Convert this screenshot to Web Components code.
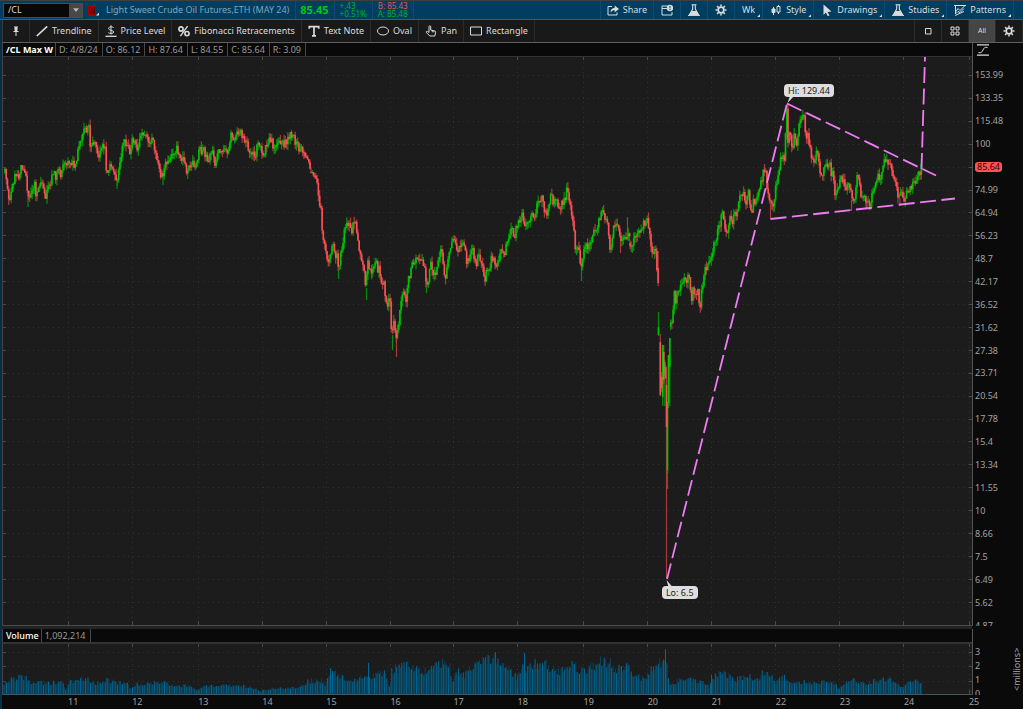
<!DOCTYPE html>
<html lang="en">
<head>
<meta charset="utf-8">
<title>/CL Charts</title>
<style>
    html { background: #0a0a0a; }
    body {
        margin: 0;
        font: 9px/12px "Noto Sans", "Open Sans", sans-serif;
        color: #dcdcdc;
    }
</style>
</head>
<body>
<trade-desk></trade-desk>

<script>
// =========================================================================
// ICONS
// =========================================================================
const GEAR = '<path d="M6 .5v2M6 9.500v2M.5 6h2M9.500 6h2M2.100 2.100l1.400 1.400M8.500 8.500l1.400 1.400M9.900 2.100L8.500 3.500M3.500 8.500L2.100 9.900" stroke-width="1.5"/><circle cx="6" cy="6" r="2.8" stroke-width="1.7"/>';
const FLASK = '<path d="M3.5 .8h5M4.7 1v4L1.5 10.8h9L7.3 5V1" stroke-width="1.1"/><path d="M3.6 7.5h4.8l2 3.3H1.6z" fill="currentColor"/><path d="M0 11.4h12" stroke-width="1"/>';

const ICONS = {
    share: '<path d="M5 2.5H1v8.5h9V8.5"/><path d="M3.5 8.5c0-3 1.5-4.6 4.2-4.6V1.6L12 5 7.7 8.3V6.2C6 6.2 4.8 6.8 3.5 8.5z" fill="currentColor" stroke="none"/>',
    alert: '<path d="M6.5 2H1v9h10V8M1 4.5h5"/><circle cx="9" cy="4" r="3.2" fill="currentColor" stroke="none"/><path d="M9 2v2.4M9 5v1" stroke="#003e61"/>',
    flask: FLASK,
    gear: GEAR,
    candles: '<path d="M3.5 3v8M8.5 1v9"/><path d="M2 5h3v3.500H2z" fill="currentColor"/><path d="M7 2.500h3v5.500H7z" fill="#003e61"/>',
    cursor: '<path d="M2.5 .5l8 7-4 .4 2 3.6-1.8.7-1.8-3.7L2.5 11z" fill="currentColor" stroke="none"/>',
    pattern: '<path d="M0 1.5h12M1 11.5l9-4M1.5 2v8M2 7.5l2-3 2 2 4.5-4.5M2 9.5l2-2 2 1 4-4"/>',
    pin: '<path d="M4 2h4M5 2.500h2v3H5zM3.500 6.500h5" fill="currentColor"/><path d="M6 6v5"/>',
    trend: '<path d="M.8 11L11.2 1.4" stroke-width="1.7"/>',
    price: '<path d="M8.6 2.6C7.8 1.8 3.6 1.2 3.6 3.5S8.7 5 8.7 7 4.2 8.7 3.3 7.6M6 .3v9.2"/><path d="M.5 11.3h11" stroke-width="1.3"/>',
    percent: '<circle cx="3" cy="4" r="2.1" stroke-width="1.6"/><circle cx="9" cy="8.6" r="2.1" stroke-width="1.6"/><path d="M9.6 1.2L2.4 11.2" stroke-width="1.4"/>',
    text: '<path d="M1.3 3.8V1.6h9.4v2.2M6 1.6v9M4 10.8h4" stroke-width="1.7"/>',
    oval: '<ellipse cx="6" cy="6" rx="5.5" ry="4"/>',
    hand: '<path d="M4 7.5V1.7c0-1.3 1.7-1.3 1.7 0V5l4 .9c1 .3 1.1.9.9 1.8L9.8 11H4.9L1.4 7.6c-.7-.9.4-1.8 1.2-1.2L4 7.5M7.3 5.6v1.6M8.9 6v1.4"/>',
    rect: '<path d="M.5 2h11v8H.5z"/>',
    single: '<path d="M3.5 3.5h5.5v5.5H3.5z"/>',
    quad: '<path d="M2 2h3v3H2zM7 2h3v3H7zM2 7h3v3H2zM7 7h3v3H7z"/>',
    curve: '<path d="M0 .8h12M0 11.2h12" stroke-width="1.2"/><path d="M1.500 8.500C7 10.500 5 1.500 10.500 3.500"/>',
    link: '<path d="M0 0h12v12H0z" fill="#a80005" stroke="none"/><path d="M4 2.3H2.5v7.4H4M8 2.3h1.5v7.4H8M5 4l1.2-1v6" stroke="#300"/>',
    down: '<path d="M1.5 3.5h9L6 9z" fill="currentColor" stroke="none"/>'
};

function define(name, html, setup) {
    customElements.define(name, class extends HTMLElement {
        connectedCallback() {
            if (this.shadowRoot) return;
            const root = this.attachShadow({ mode: 'open' });
            root.innerHTML = html;
            if (setup) setup(root, this);
        }
    });
}

define('ui-icon', `
<style>
    :host { display: block; flex: none; width: 12px; height: 12px; }
    svg { display: block; width: 100%; height: 100%; fill: none; stroke: currentColor; }
</style>`, (root, el) => {
    root.innerHTML += `<svg viewBox="0 0 12 12" preserveAspectRatio="none" aria-hidden="true">${ICONS[el.getAttribute('name')]}</svg>`;
});

// Toolbar button: icon + slotted label; "menu" adds the corner mark
define('tool-button', `
<style>
    :host { display: flex; flex: none; border-right: 1px solid var(--line); }
    button {
        display: flex; align-items: center; justify-content: center; gap: 4px;
        padding: 0 6px;
        min-width: 26px;
        border: 0;
        background: none;
        font: inherit; color: inherit;
        white-space: nowrap;
    }
    .mark { display: none; }
    :host([menu]) button { padding: 0 2px 0 7px; }
    :host([menu]) .mark {
        display: block; align-self: flex-end;
        width: 3px; height: 3px; margin: 0 0 2px -2px;
        background: #dcdcdc;
        clip-path: polygon(100% 0, 100% 100%, 0 100%);
    }
    :host([active]) { background: #454545; }
    :host([active]) button { font-size: 7px; }
</style>
<button type="button"><slot></slot><span class="mark"></span></button>`, (root, el) => {
    const btn = root.querySelector('button');
    if (el.hasAttribute('icon')) {
        const icon = document.createElement('ui-icon');
        icon.setAttribute('name', el.getAttribute('icon'));
        btn.prepend(icon);
    }
    if (el.title) btn.setAttribute('aria-label', el.title);
    if (!el.textContent.trim()) root.querySelector('slot').remove();
    if (!el.hasAttribute('menu')) root.querySelector('.mark').remove();
});

// =========================================================================
// TOP BAR
// =========================================================================
define('symbol-box', `
<style>
    :host { display: flex; flex: none; align-items: center; gap: 5px; }
    .combo { display: flex; width: 78px; height: 13px; border: 1px solid #4b4b4b; background: #080808; }
    input {
        flex: 1; min-width: 0; padding: 0 4px;
        border: 0; outline: 0; background: none;
        font: inherit; color: #d8d8d8;
    }
    button { flex: none; padding: 0; border: 0; background: none; }
    .combo button { width: 13px; background: #484848; color: #b4b4b4; display: grid; place-items: center; }
    .combo ui-icon { width: 8px; height: 8px; }
    .link { display: flex; align-items: flex-end; color: inherit; }
    .link ui-icon { width: 8px; height: 11px; }
    .mark { width: 3px; height: 3px; background: #dcdcdc; clip-path: polygon(100% 0, 100% 100%, 0 100%); }
</style>
<div class="combo">
    <input aria-label="Symbol" value="/CL">
    <button type="button" aria-label="Recent symbols"><ui-icon name="down"></ui-icon></button>
</div>
<button class="link" type="button" aria-label="Link group"><ui-icon name="link"></ui-icon><span class="mark"></span></button>`);

define('quote-strip', `
<style>
    :host { display: flex; flex: none; align-items: stretch; }
    div { display: flex; align-items: center; border-right: 1px solid var(--line); padding: 0 5px 0 4px; }
    .name { color: #80a5b8; padding: 0 6px 0 7px; }
    .last { font-size: 11px; font-weight: 700; color: #00c80a; }
    .pair { flex-direction: column; align-items: flex-start; justify-content: center; padding: 0 5px; font-size: 8px; line-height: 8px; }
    .pair span { height: 8px; }
    .up { color: #00b414; }
    .down { color: #e8544e; }
</style>
<div class="name">Light Sweet Crude Oil Futures,ETH (MAY 24)</div>
<div class="last">85.45</div>
<div class="pair"><span class="up">+.43</span><span class="up">+0.51%</span></div>
<div class="pair"><span class="down">B: 85.43</span><span class="up">A: 85.48</span></div>`);

define('top-bar', `
<style>
    :host {
        --line: #0d4c70;
        display: flex; height: 18px;
        border-top: 1px solid #3d4143; border-bottom: 1px solid #50575a;
        background: #003e61;
    }
    symbol-box { margin-left: 3px; }
    nav { display: flex; margin-left: auto; margin-right: 9px; border-left: 1px solid var(--line); }
</style>
<symbol-box></symbol-box>
<quote-strip></quote-strip>
<nav>
    <tool-button icon="share">Share</tool-button>
    <tool-button icon="alert" title="Alerts"></tool-button>
    <tool-button icon="flask" title="Edit studies"></tool-button>
    <tool-button icon="gear" title="Chart settings"></tool-button>
    <tool-button menu>Wk</tool-button>
    <tool-button icon="candles" menu>Style</tool-button>
    <tool-button icon="cursor" menu>Drawings</tool-button>
    <tool-button icon="flask" menu>Studies</tool-button>
    <tool-button icon="pattern" menu>Patterns</tool-button>
</nav>`);

define('drawing-bar', `
<style>
    :host {
        --line: #2b2b2b;
        display: flex; height: 22px;
        border-bottom: 1px solid #5e5e5e; border-left: 1px solid #3a3a3a;
        background: #191919;
    }
    nav { display: flex; margin-left: auto; border-left: 1px solid var(--line); }
</style>
<tool-button icon="pin" title="Pin"></tool-button>
<tool-button icon="trend">Trendline</tool-button>
<tool-button icon="price">Price Level</tool-button>
<tool-button icon="percent">Fibonacci Retracements</tool-button>
<tool-button icon="text">Text Note</tool-button>
<tool-button icon="oval">Oval</tool-button>
<tool-button icon="hand">Pan</tool-button>
<tool-button icon="rect">Rectangle</tool-button>
<nav>
    <tool-button icon="single" title="Single chart"></tool-button>
    <tool-button icon="quad" title="Chart grid"></tool-button>
    <tool-button active>All</tool-button>
    <tool-button icon="gear" title="Settings"></tool-button>
</nav>`);

// Strip of readings above a pane; a bold first cell names it
define('info-strip', `
<style>
    :host { display: flex; border-bottom: 1px solid #333; border-left: 1px solid #444; background: #090909; color: #9a9a9a; }
    ::slotted(*) { padding: 0 4px 0 3px; border-right: 1px solid #484848; line-height: 13px; white-space: nowrap; }
    ::slotted(b) { padding: 0 2px 0 3px; color: #fff; }
    ::slotted(.pane) { font-weight: 500; }
</style>
<slot></slot>`);

// =========================================================================
// SERIES DATA
// =========================================================================
const WEEK = 1.235;
const YEARS = [68, 132, 198, 262, 326, 390, 453, 517, 583, 647, 711, 775, 839, 903, 969];

// Runs of x,y pairs in thirds of a unit from the run's origin
const RUNS = [
    { x: 0, y: 60, pts: '15,340 20,370 28,415 36,375 45,350 55,355 62,325 77,325 80,370 85,420 92,400 98,390 104,370 108,405 115,380 125,350 130,385 138,405 150,380 158,345 170,350 176,320 184,350 190,305 200,310 210,300 220,305 228,325 232,280 240,230 243,255 250,220 256,200 262,215 268,190 271,265 278,255 285,245 290,260 296,300 302,260 312,255 317,280 320,345 328,325 335,310 342,330 350,375 355,325 362,290 370,255 376,245 384,245 390,280 398,240 406,255 416,265 422,215 430,225 440,220 445,240 455,235 460,230 463,270 470,285 475,300 480,345 487,335 490,365 495,310 503,315 510,290 520,270 532,260 538,300 543,310 548,290 553,320 560,330 568,315 585,315 592,290 600,270 612,270 618,290 625,300 636,270 645,315 652,275 660,280 668,280 680,265 685,280 690,230 695,215 700,230 712,225 722,208 730,235 740,250 750,280 765,290 772,260 780,255 787,290 795,270 803,255 813,235 822,262 836,235 848,255 860,240 872,222 885,240 895,262 910,280 925,290 932,325' },
    { x: 310, y: 170, pts: '3,5 15,30 25,60 30,120 35,130 36,190 45,215 48,250 55,290 60,270 63,240 68,225 75,260 80,240 85,300 90,265 97,230 103,190 112,160 120,175 127,185 130,160 137,165 143,200 147,230 155,275 160,300 168,345 172,280 180,300 190,305 195,260 203,300 207,290 213,345 222,340 227,410 235,390 242,385 244,480 248,495 252,440 256,480 260,510 265,460 268,445 275,390 280,345 288,400 295,330 303,300 310,280 320,250 325,280 335,260 340,300 345,300 350,350 357,330 362,265 368,315 375,320 383,270 390,245 398,250 402,310 406,325 415,250 422,225 432,215 440,235 450,230 460,215 466,240 470,275 480,260 486,225 495,270 500,295 505,240 512,280 520,310 524,330 532,295 540,290 545,260 558,285 565,265 575,235 583,260 590,220 603,185 615,190 625,160 637,120 643,175 650,140 657,160 665,130 675,145 683,100 697,80 705,125 713,130 722,65 730,100 740,100 745,130 755,100 762,95 770,65 778,90 785,130 792,190 797,250 808,230 812,300 815,300 820,250 828,215 838,235 848,190 860,175 870,140 877,125 885,155 893,150 897,225 905,230 910,180 920,165 930,205 938,200 942,215 950,190 955,190 960,215' },
    { x: 630, y: 60, pts: '0,550 8,545 15,525 25,515 35,520 42,490 53,475 58,510 65,560 70,580 75,570 80,580' },
    { x: 630, y: 60, pts: '122,800 126,780 130,740 133,700 138,730 145,690 155,680 165,660 178,655 183,720 190,690 195,710 203,680 208,740 213,730 215,670 220,680 225,630 235,605 245,590 250,555 258,560 263,510 270,490 277,455 285,500 293,510 300,480 308,480 315,450 318,480 325,425 335,405 340,390 348,425 355,400 360,430 365,470 370,430 380,425 390,380 400,340 408,345 413,390 416,395 420,440 425,410 428,440 435,395 442,350 450,310 457,290 463,290 467,200 470,150 474,250 480,200 487,270 493,230 500,265 505,205 515,175 520,160 527,225 535,230 545,290 550,310 555,290 562,280 567,320 575,360 583,300 590,320 598,295 604,345 610,340 616,415 622,390 630,365 640,355 648,390 658,365 664,400 668,440 675,400 680,350 688,360 693,410 700,420 705,405 712,430 720,440 727,400 733,390 740,350 752,350 760,310 768,290 778,320 785,320 790,360 800,390 807,420 815,400 822,420 830,390 838,400 847,370 855,375 862,350 868,340 875,320' }
];

// Spring 2020: x, high, body top, body bottom, low, direction
const CRASH = [
    [656.9, 248, 251, 270, 272, 0],
    [658.1, 251, 268, 283, 286, 0],
    [658.5, 312, 327, 335, 336, 1],
    [660.3, 334, 342, 395, 396, 0],
    [661.7, 372, 377, 388, 392, 0],
    [662.7, 345, 345, 397, 406, 1],
    [663.8, 345, 352, 380, 384, 0],
    [664.8, 360, 362, 375, 406, 1],
    [665.8, 365, 367, 378, 379, 0],
    [666.5, 377, 385, 427, 578, 0],
    [667.5, 402, 402, 473, 489, 1],
    [668.5, 355, 355, 403, 408, 1],
    [669.8, 338, 338, 367, 406, 1]
];

// Sharp weekly lows and highs: x, from, to, direction
const SPIKES = [
    [28, 194, 207, 1], [45, 186, 199, 0], [117, 178, 189, 1], [163, 175, 185, 1], [215, 160, 168, 0],
    [338.5, 265, 279, 1], [366.5, 288, 300, 1], [368, 258, 280, 1], [392.5, 335, 350, 1], [396.5, 330, 357, 0],
    [426.5, 283, 293, 1], [566.5, 186, 200, 1], [581.5, 268, 281, 1], [620.5, 240, 253, 0], [627.5, 217, 232, 0],
    [770.5, 205, 219, 0], [787, 104, 140, 0], [851.5, 200, 211, 0], [866, 200, 208, 0], [900, 198, 204, 0]
];

const VOLUME = '3,10 10,15 25,18 30,13 40,12 63,12 66,5 70,13 88,17 95,10 107,15 120,12 128,10 131,5 136,11 150,11 163,12 170,9 190,9 197,4 205,8 225,9 250,8 260,3 270,6 290,6 303,9 308,14 322,14 325,10 330,20 333,25 336,19 345,17 355,14 365,19 368,24 370,17 378,20 386,22 388,10 390,5 392,25 400,28 410,30 420,22 430,28 440,32 450,28 453,10 456,26 462,18 470,25 480,33 492,36 497,38 500,28 510,27 517,17 520,25 524,36 527,25 535,32 545,32 560,22 570,30 585,25 600,34 610,33 615,24 627,32 630,25 645,15 650,25 658,34 664,30 667,30 668,20 670,10 680,15 700,14 708,11 710,5 711,18 725,22 735,15 750,20 757,14 763,22 769,23 775,12 785,18 793,10 805,13 825,12 835,13 838,5 850,16 862,11 880,15 890,16 902,7 912,14 922,13';

// Single tall weeks: x, height
const VOLUME_PEAKS = [[330.5, 26], [368.5, 31], [524.5, 41], [665.5, 45], [711.5, 19]];

const parse = (s) => s.split(' ').map((p) => p.split(',').map(Number));

function lerp(pts, x) {
    let i = 1;
    while (i < pts.length - 1 && pts[i][0] < x) i++;
    const [x0, y0] = pts[i - 1];
    const [x1, y1] = pts[i];
    return y0 + (y1 - y0) * Math.min(1, Math.max(0, (x - x0) / (x1 - x0)));
}

let seed = 77;
function rnd() {
    seed = (seed * 16807) % 2147483647;
    return seed / 2147483647;
}

// =========================================================================
// CHART PANES
// =========================================================================
const PANE_STYLE = `
    :host { display: block; position: relative; min-height: 0; border-left: 1px solid #444; background: #1c1c1c; overflow: hidden; }
    svg { position: absolute; inset: 0; width: 100%; height: 100%; fill: none; }
    .grid { stroke: #303030; stroke-dasharray: 1 4; }
    .tick { stroke: #4a4a4a; }`;

function gridLines(rows, top, bottom) {
    const xs = YEARS.map((x) => `M${x + .5} ${top}V${bottom}`).join('');
    const ys = rows.map((y) => `M3 ${y}H972`).join('');
    const ends = YEARS.map((x) => `M${x + .5} ${top}v3M${x + .5} ${bottom}v-4`).join('');
    const sides = rows.map((y) => `M3 ${y}h3M969 ${y}h3`).join('');
    return `<path class="grid" d="${xs}${ys}"/><path class="tick" d="${ends}${sides}"/>`;
}

define('price-pane', `
<style>
    ${PANE_STYLE}
    :host { border-bottom: 1px solid #4a4a4a; }
    .up { stroke: #00c400; stroke-width: 1.6; }
    .down { stroke: #ff5055; stroke-width: 1.6; }
    .up.wick { stroke: #078c0d; stroke-width: 1.2; }
    .down.wick { stroke: #a83a3e; stroke-width: 1.2; }
    .draw { stroke: #f07cf5; stroke-width: 1.8; stroke-dasharray: 16 5.5; }
    .tip { fill: #dedede; }
    .note {
        position: absolute;
        padding: 0 4px;
        border-radius: 4px;
        background: #dedede; color: #1c1c1c;
        line-height: 13px;
    }
    .hi { left: 80.6%; top: 4.8%; }
    .lo { left: 68%; top: 93.2%; }
</style>
<svg viewBox="3 57 969 568" preserveAspectRatio="none" role="img" aria-label="Weekly price"></svg>
<span class="note hi">Hi: 129.44</span>
<span class="note lo">Lo: 6.5</span>`, (root) => {
    const d = { up: '', down: '', upWick: '', downWick: '' };
    const candle = (x, high, top, bottom, low, up) => {
        const key = up ? 'up' : 'down';
        d[key] += `M${x.toFixed(2)} ${top.toFixed(1)}V${bottom.toFixed(1)}`;
        d[key + 'Wick'] += `M${x.toFixed(2)} ${high.toFixed(1)}V${low.toFixed(1)}`;
    };

    RUNS.forEach((run) => {
        const pts = parse(run.pts).map(([x, y]) => [run.x + x / 3, run.y + y / 3]);
        const end = pts[pts.length - 1][0];
        let open = pts[0][1];
        for (let x = pts[0][0]; x <= end; x += WEEK) {
            const close = lerp(pts, x) + (rnd() - .5) * 9;
            const top = Math.min(open, close);
            const bottom = Math.max(open, close, top + 1);
            candle(x, top - rnd() * 6, top, bottom, bottom + rnd() * 6, close < open);
            open = close;
        }
    });
    CRASH.forEach((c) => candle(...c));
    SPIKES.forEach(([x, from, to, up]) => {
        d[up ? 'upWick' : 'downWick'] += `M${x} ${from}V${to}`;
    });

    const rows = Array.from({ length: 24 }, (_, i) => Math.round(75 + i * 22.9) + .5);
    root.querySelector('svg').innerHTML = `
        ${gridLines(rows, 57, 625)}
        <path class="up wick" d="${d.upWick}"/><path class="down wick" d="${d.downWick}"/>
        <path class="up" d="${d.up}"/><path class="down" d="${d.down}"/>
        <path d="M667.5 470V489" stroke="#078c0d"/>
        <path class="tip" d="M790 96l-2.500 7 6.500-7zM666.500 580l2 7h4z"/>
        <path class="draw" d="M667 579L787 103.500M787 103.500L936 175.500M770.500 219L955 198.500M921.500 169L925 57"/>`;
});

define('volume-pane', `
<style>
    ${PANE_STYLE}
    :host { border-bottom: 1px solid #3f5560; border-top: 1px solid #333; }
    .bars { stroke: #006797; }
    .dim { stroke: #0b4258; }
</style>
<svg viewBox="3 644 969 50" preserveAspectRatio="none" role="img" aria-label="Weekly volume"></svg>`, (root) => {
    const pts = parse(VOLUME);
    const d = ['', ''];
    let week = 0;
    for (let x = 4; x <= 922; x += WEEK) {
        const h = lerp(pts, x) * (.74 + rnd() * .4);
        d[week++ % 2] += `M${x.toFixed(2)} 694v-${h.toFixed(1)}`;
    }
    VOLUME_PEAKS.forEach(([x, h]) => { d[0] += `M${x} 694v-${h}`; });
    root.querySelector('svg').innerHTML = `${gridLines([652.5, 666.5, 681.5], 644, 694)}
        <path class="dim" d="${d[1]}"/><path class="bars" d="${d[0]}"/>`;
});

// =========================================================================
// AXES
// =========================================================================
define('price-axis', `
<style>
    :host { display: flex; min-height: 0; overflow: hidden; border-left: 1px solid #555; color: #a2a2a2; }
    ol { flex: 1; display: flex; flex-direction: column; margin: 7px 0 -11px; padding: 0 0 0 2px; list-style: none; }
    li { flex: 1 1 0; min-height: 0; display: flex; align-items: center; }
    mark { padding: 0 2px; border-radius: 3px; background: #ff5055; color: #2a0808; line-height: 10px; }
</style>
<ol></ol>`, (root) => {
    const labels = ['153.99', '133.35', '115.48', '100', '85.64', '74.99', '64.94', '56.23', '48.7', '42.17', '36.52', '31.62', '27.38',
        '23.71', '20.54', '17.78', '15.4', '13.34', '11.55', '10', '8.66', '7.5', '6.49', '5.62', '4.87'];
    root.querySelector('ol').innerHTML = labels
        .map((t) => `<li>${t === '85.64' ? `<mark>${t}</mark>` : t}</li>`).join('');
});

define('volume-axis', `
<style>
    :host { display: flex; justify-content: space-between; min-height: 0; overflow: hidden; border-left: 1px solid #555; color: #a2a2a2; }
    ol { display: flex; flex-direction: column; gap: 2px; margin: 3px 0 0; padding: 0 0 0 2px; list-style: none; }
    .unit { writing-mode: vertical-rl; transform: rotate(180deg); text-align: center; white-space: nowrap; }
</style>
<ol><li>3</li><li>2</li><li>1</li><li>0</li></ol>
<span class="unit">&lt;millions&gt;</span>`);

define('time-axis', `
<style>
    :host { display: grid; grid-template-columns: 66fr 64fr 66fr 64fr 64fr 64fr 63fr 64fr 66fr 64fr 64fr 64fr 64fr 64fr 65fr 54fr; color: #a2a2a2; line-height: 13px; }
</style>
<span></span>`, (root) => {
    for (let y = 11; y <= 25; y++) root.innerHTML += `<span>${y}</span>`;
});

define('trade-desk', `
<style>
    :host { display: flex; flex-direction: column; min-height: 100vh; background: #0a0a0a; }
    .body { flex: 1; display: flex; flex-direction: column; border-left: 2px solid #062f47; }
    main {
        flex: 1;
        display: grid;
        grid-template-columns: 1fr 51px;
        grid-template-rows: 14px minmax(200px, 1fr) 3px 14px 52px 14px;
    }
    .corner { border-left: 1px solid #555; padding: 1px 4px; }
    .gap { background: #232323; }
    .side { border-left: 1px solid #555; }
    time-axis { grid-column: 1 / -1; }
</style>
<top-bar></top-bar>
<div class="body">
    <drawing-bar></drawing-bar>
    <main>
        <info-strip>
            <b>/CL Max W</b><span>D: 4/8/24</span><span>O: 86.12</span><span>H: 87.64</span><span>L: 84.55</span><span>C: 85.64</span><span>R: 3.09</span>
        </info-strip>
        <div class="corner"><ui-icon name="curve"></ui-icon></div>
        <price-pane></price-pane>
        <price-axis></price-axis>
        <div class="gap"></div>
        <div></div>
        <info-strip><b class="pane">Volume</b><span>1,092,214</span></info-strip>
        <div class="side"></div>
        <volume-pane></volume-pane>
        <volume-axis></volume-axis>
        <time-axis></time-axis>
    </main>
</div>`);
</script>
</body>
</html>
